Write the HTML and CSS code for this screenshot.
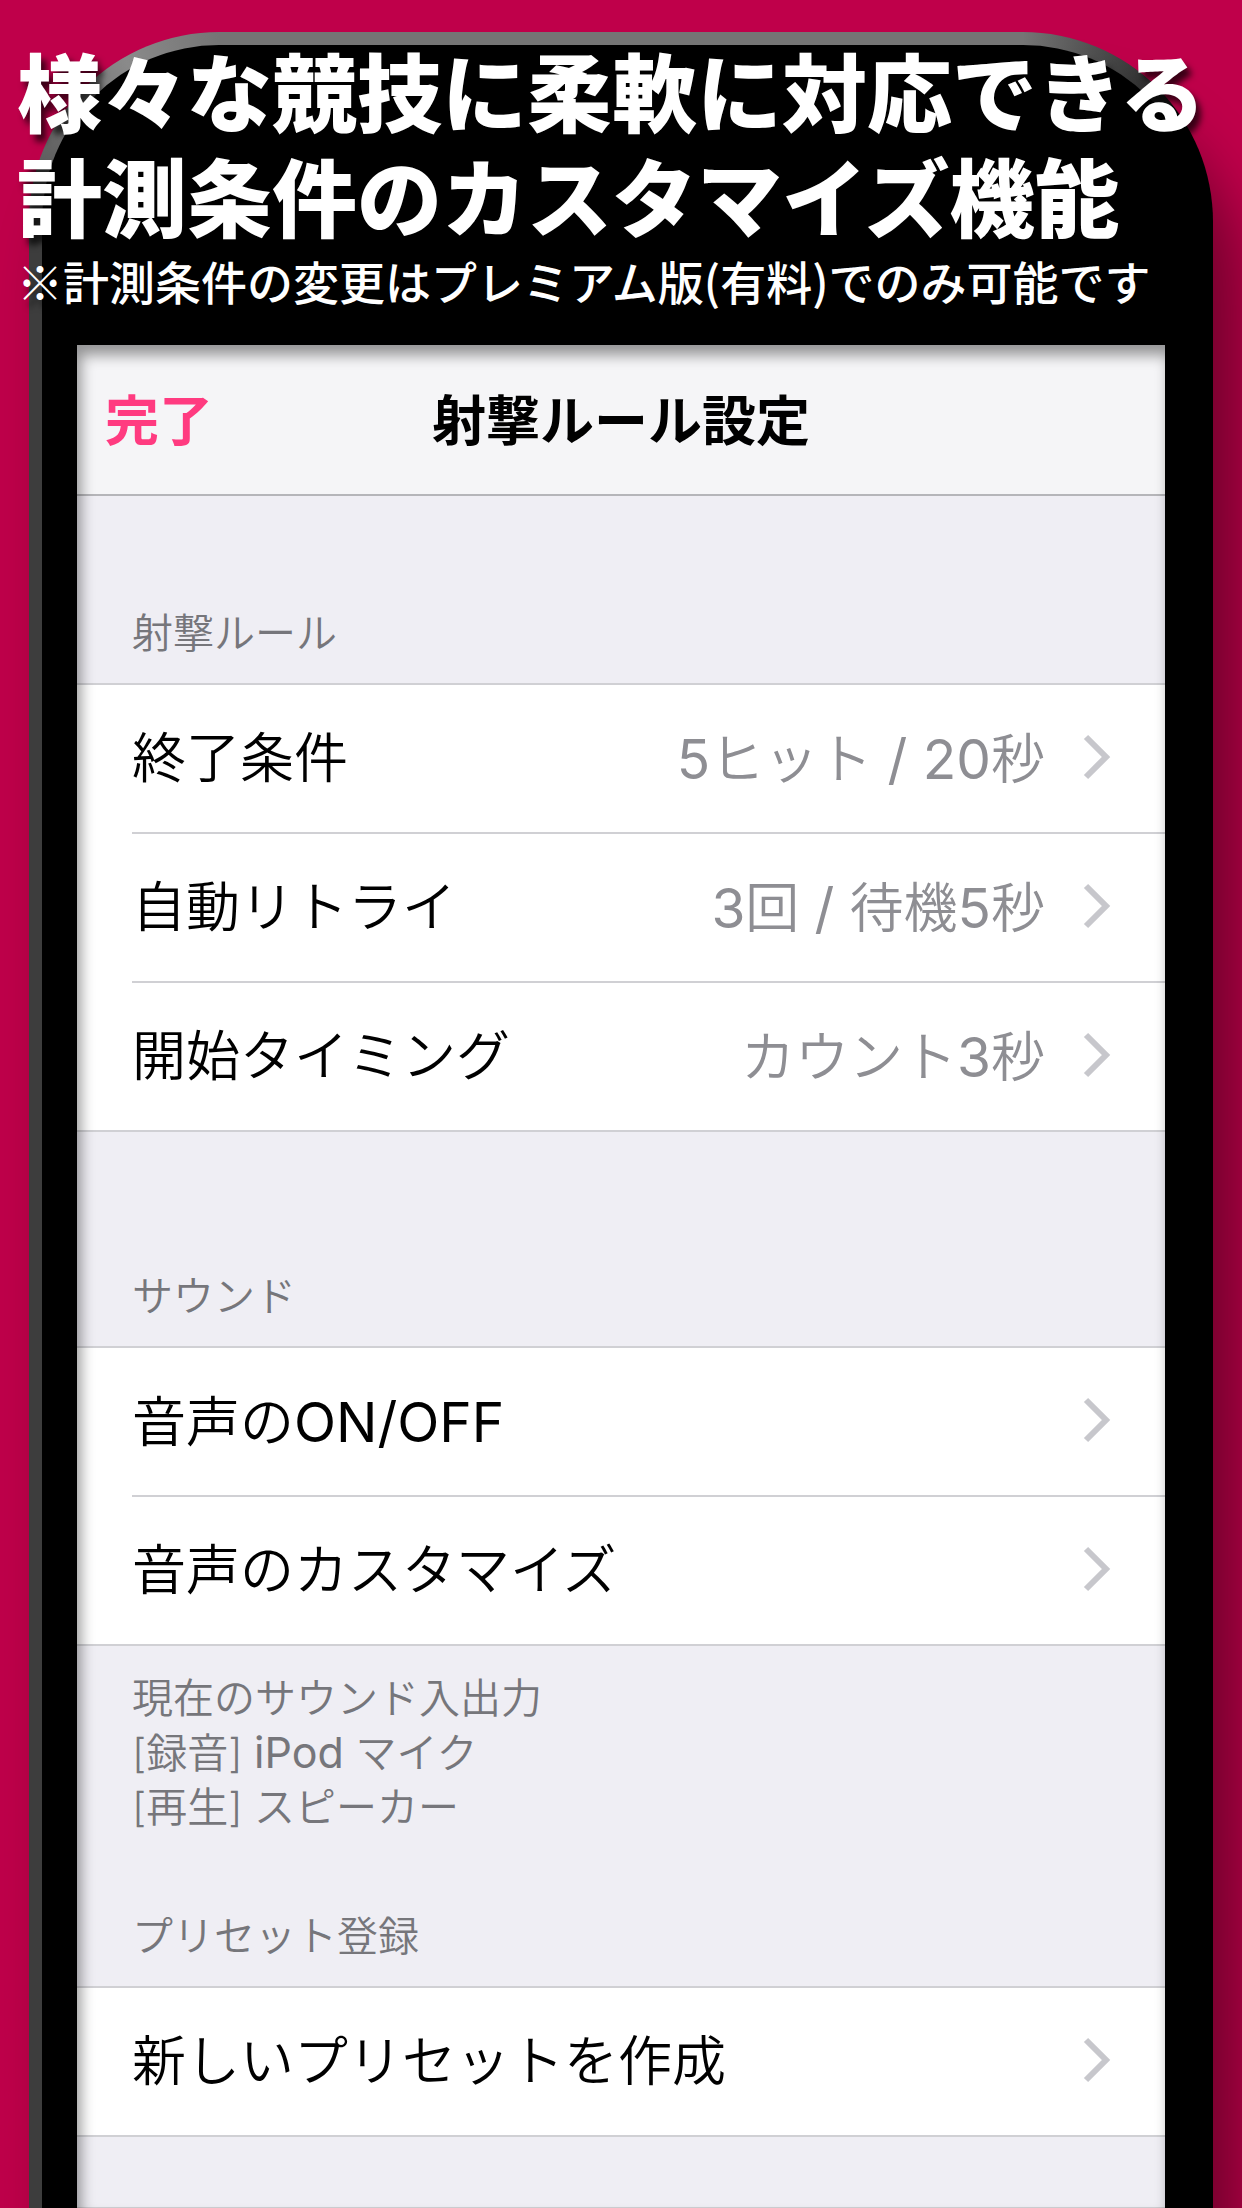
FILE: index.html
```
<!DOCTYPE html>
<html lang="ja">
<head>
    <meta charset="utf-8">
    <meta name="viewport" content="width=device-width">
    <title>射撃ルール設定</title>
    <link rel="stylesheet" href="styles.css">
</head>

<body>
    <div class="headline">
        <h1>様々な競技に柔軟に対応できる<br>計測条件のカスタマイズ機能</h1>
        <p class="note">※計測条件の変更はプレミアム版(有料)でのみ可能です</p>
    </div>

    <div class="phone">
        <div class="bezel">
            <main class="screen">
                <header class="nav">
                    <button class="done" type="button">完了</button>
                    <h2 class="title">射撃ルール設定</h2>
                </header>

                <h3 class="label first">射撃ルール</h3>
                <nav class="group">
                    <a class="row" href="#end">
                        <span class="name">終了条件</span>
                        <span class="value"><span class="latin">5</span>ヒット <span class="latin">/ 20</span>秒</span>
                        <svg class="arrow" viewBox="0 0 28 46"><path d="M3 3 L23 23 L3 43"/></svg>
                    </a>
                    <a class="row" href="#retry">
                        <span class="name">自動リトライ</span>
                        <span class="value"><span class="latin">3</span>回 <span class="latin">/</span> 待機<span class="latin">5</span>秒</span>
                        <svg class="arrow" viewBox="0 0 28 46"><path d="M3 3 L23 23 L3 43"/></svg>
                    </a>
                    <a class="row" href="#timing">
                        <span class="name">開始タイミング</span>
                        <span class="value">カウント<span class="latin">3</span>秒</span>
                        <svg class="arrow" viewBox="0 0 28 46"><path d="M3 3 L23 23 L3 43"/></svg>
                    </a>
                </nav>

                <h3 class="label">サウンド</h3>
                <nav class="group">
                    <a class="row" href="#voice">
                        <span class="name">音声の<span class="latin">ON/OFF</span></span>
                        <svg class="arrow" viewBox="0 0 28 46"><path d="M3 3 L23 23 L3 43"/></svg>
                    </a>
                    <a class="row" href="#voice-custom">
                        <span class="name">音声のカスタマイズ</span>
                        <svg class="arrow" viewBox="0 0 28 46"><path d="M3 3 L23 23 L3 43"/></svg>
                    </a>
                </nav>
                <p class="footnote">現在のサウンド入出力<br>[録音] <span class="device">iPod</span> マイク<br>[再生] スピーカー</p>

                <h3 class="label preset">プリセット登録</h3>
                <nav class="group">
                    <a class="row" href="#new">
                        <span class="name">新しいプリセットを作成</span>
                        <svg class="arrow" viewBox="0 0 28 46"><path d="M3 3 L23 23 L3 43"/></svg>
                    </a>
                </nav>
                <div class="rest"></div>
            </main>
        </div>
    </div>
</body>
</html>
```

FILE: styles.css
```
* {
    box-sizing: border-box;
}

body {
    margin: 0;
    min-height: 100vh;
    display: flex;
    flex-direction: column;
    position: relative;
    overflow-x: hidden;
    background: #bf004a;
    font-family: "Inter", "Noto Sans CJK JP", sans-serif;
}

h1, h2, h3, p {
    margin: 0;
}

/* headline sits on top of the phone */
.headline {
    position: absolute;
    top: 36px;
    left: 17px;
    z-index: 2;
    color: white;
    font-family: "Noto Sans CJK JP", sans-serif;
    text-shadow: 5px 7px 6px rgba(0, 0, 0, 0.7);
    white-space: nowrap;
}

.headline h1 {
    font-size: 85px;
    font-weight: 900;
    line-height: 105px;
}

.note {
    font-size: 46px;
    font-weight: 500;
    line-height: 68px;
}

/* phone body, metal edge on the top and left */
.phone {
    flex: 1;
    display: flex;
    margin: 32px 29px 0;
    padding: 13px 13px 0;
    border-radius: 190px 190px 0 0;
    background:
        conic-gradient(from 270deg at 100% 100%, #3d3d3d, #606060 20deg, #8a8a8a 60deg, #757575 90deg) left top / 190px 190px no-repeat,
        conic-gradient(from 0deg at 0 100%, #757575, #2a2a2a 45deg, #000 55deg) right top / 190px 190px no-repeat,
        linear-gradient(#757575, #757575) 190px 0 / calc(100% - 380px) 13px no-repeat,
        linear-gradient(#3d3d3d, #3d3d3d) 0 190px / 13px 100% no-repeat,
        #000;
    box-shadow: 29px 70px 60px rgba(0, 0, 0, 0.4);
}

.bezel {
    flex: 1;
    display: flex;
    padding: 300px 35px 0;
    border-radius: 177px 177px 0 0;
    background: #000;
}

.screen {
    flex: 1;
    display: flex;
    flex-direction: column;
    position: relative;
    background: #efeef4;
}

.screen::after {
    content: "";
    position: absolute;
    inset: 0;
    box-shadow: inset 4px 10px 14px rgba(0, 0, 0, 0.4);
    pointer-events: none;
}

.nav {
    display: grid;
    grid-template-columns: 1fr auto 1fr;
    align-items: center;
    height: 151px;
    padding: 0 28px 4px;
    background: #f5f5f7;
    border-bottom: 2px solid #b5b5b9;
}

.done {
    justify-self: start;
    padding: 0;
    border: 0;
    background: none;
    color: #ff3b80;
    font-family: inherit;
    font-size: 54px;
    font-weight: 700;
    cursor: pointer;
}

.title {
    font-size: 54px;
    font-weight: 700;
}

.label, .footnote {
    color: #76767b;
    font-size: 41px;
    font-weight: 350;
    line-height: 54px;
}

.label {
    padding: 137px 55px 23px;
}

.label.first {
    padding-top: 110px;
}

.label.preset {
    padding-top: 75px;
}

.footnote {
    padding: 25px 55px 0;
}

.group {
    background: white;
    border-top: 2px solid #d0d0d4;
    border-bottom: 2px solid #d0d0d4;
}

.row {
    display: flex;
    align-items: center;
    height: 147px;
    margin-left: 55px;
    padding: 0 54px 4px 0;
    color: black;
    font-size: 54px;
    font-weight: 350;
    line-height: 70px;
    text-decoration: none;
}

.row + .row {
    height: 149px;
    border-top: 2px solid #d0d0d4;
}

.name, .value {
    padding-top: 5px;
}

.name {
    flex: 1;
}

.value {
    margin-right: 38px;
    color: #8e8e93;
}

.latin {
    font-size: 55px;
    font-weight: 400;
}

.device {
    font-size: 43px;
    font-weight: 400;
}

.arrow {
    width: 28px;
    height: 46px;
    fill: none;
    stroke: #c7c7cc;
    stroke-width: 6;
}

.rest {
    flex: 1;
    border-bottom: 1px solid #d0d0d4;
}
```
